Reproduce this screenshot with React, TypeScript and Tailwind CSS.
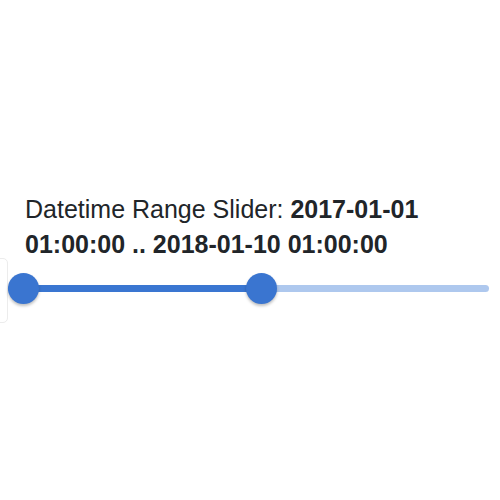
import React from "react";

export default function App() {
  const fillWidth = 246 - 8 + 15; // px from track start to right handle center
  return (
    <div className="relative w-[500px] h-[500px] bg-white overflow-hidden" style={{ fontFamily: '"Liberation Sans", Arial, sans-serif' }}>
      <div className="pt-[192px]">
        <p className="pl-[25px] pr-[10px] text-[25px] leading-[34.5px] text-[#212529]">
          Datetime Range Slider: <b className="font-bold">2017-01-01 01:00:00 .. 2018-01-10 01:00:00</b>
        </p>
        <div className="relative mt-[11.5px] ml-[8px] w-[481px] h-[31px] flex items-center">
          <div className="absolute left-[-20px] top-[-15px] w-[20px] h-[65px] border border-[#ececec] rounded-[5px] bg-white" />
          <div className="relative w-full h-[7px] rounded-full bg-[#aec8ee]">
            <div className="h-full rounded-l-full bg-[#3a76d1]" style={{ width: fillWidth }} />
          </div>
          <div className="absolute left-0 top-0 w-[31px] h-[31px] rounded-full bg-[#3a75d0] shadow-[0_2px_3px_rgba(0,0,0,0.25)]" />
          <div className="absolute left-[238px] top-0 w-[31px] h-[31px] rounded-full bg-[#3a75d0] shadow-[0_2px_3px_rgba(0,0,0,0.25)]" />
        </div>
      </div>
    </div>
  );
}
